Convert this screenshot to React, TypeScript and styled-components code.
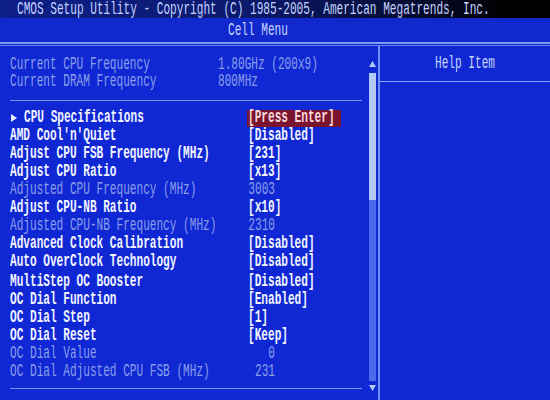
import React from 'react';
import styled, { createGlobalStyle } from 'styled-components';

const GlobalStyle = createGlobalStyle`
  html, body {
    margin: 0;
    padding: 0;
    background: #1028d4;
  }
  * {
    box-sizing: border-box;
  }
`;

type Tone = 'bright' | 'dim' | 'head' | 'hot';

const toneColor: Record<Tone, string> = {
    bright: '#f2f5ff',
    dim: '#8a9ee8',
    head: '#c6d2ff',
    hot: '#f6d8dc',
};

const Screen = styled.div`
  width: 550px;
  height: 400px;
  display: flex;
  flex-direction: column;
  background: #1028d4;
  font-family: "Liberation Mono", "DejaVu Sans Mono", monospace;
  overflow: hidden;
`;

const Txt = styled.span<{ $tone: Tone }>`
  display: inline-block;
  font-size: 11.1px;
  line-height: 11px;
  white-space: pre;
  transform: scaleY(1.6);
  color: ${(p) => toneColor[p.$tone]};
  font-weight: ${(p) => (p.$tone === 'dim' || p.$tone === 'head' ? 400 : 700)};
`;

const TitleBar = styled.div`
  height: 18px;
  display: flex;
  align-items: center;
  padding-left: 17px;
  background: linear-gradient(90deg, #0d1f88 0%, #0b1a6c 45%, #050a2a 78%, #000 92%);
`;

const SubBar = styled.div`
  height: 24px;
  display: flex;
  align-items: center;
  padding-left: 228px;
  background: #1129cc;
`;

const DoubleRule = styled.div`
  height: 4px;
  border-top: 2px solid #7f9df4;
  border-bottom: 1px solid #6484ee;
`;

const Main = styled.div`
  flex: 1;
  display: flex;
`;

const LeftPanel = styled.div`
  width: 369px;
  padding: 9px 7px 0 10px;
  display: flex;
  flex-direction: column;
`;

const Row = styled.div<{ $valueAt: number }>`
  height: 18.1px;
  display: grid;
  grid-template-columns: ${(p) => p.$valueAt}px 1fr;
  align-items: center;
`;

const Label = styled.div`
  display: flex;
  align-items: center;
`;

const Arrow = styled.svg`
  width: 6px;
  height: 8px;
  margin: 0 7px 0 1px;
`;

const Value = styled.div<{ $hot?: boolean; $right?: boolean }>`
  display: flex;
  align-items: center;
  justify-content: ${(p) => (p.$right ? 'flex-end' : 'flex-start')};
  width: ${(p) => (p.$right ? '27px' : 'auto')};
  justify-self: start;
  height: 17px;
  margin-left: ${(p) => (p.$hot ? '-1px' : '0')};
  padding: ${(p) => (p.$hot ? '0 6px 0 1px' : '0')};
  background: ${(p) => (p.$hot ? '#7a1530' : 'transparent')};
`;

const Rule = styled.div<{ $top: number; $bottom: number }>`
  height: 0;
  border-top: 1.5px solid #7896f2;
  margin: ${(p) => p.$top}px 0 ${(p) => p.$bottom}px;
`;

const ScrollCol = styled.div`
  width: 7px;
  display: flex;
  flex-direction: column;
  align-items: center;
  padding: 15px 0 9px;
`;

const ScrollArrow = styled.svg`
  width: 7px;
  height: 6px;
  flex: none;
`;

const Thumb = styled.div`
  width: 7px;
  height: 127px;
  margin-top: 6px;
  flex: none;
  background: #b2caf4;
`;

const Track = styled.div`
  width: 7px;
  flex: 1;
  margin-bottom: 4px;
  background-color: #2c4ce2;
  background-image: radial-gradient(circle, #5a7cf0 0.6px, transparent 0.9px);
  background-size: 2px 2px;
`;

const Divider = styled.div`
  width: 2px;
  margin-left: 2px;
  background: #6f8ff2;
`;

const RightPanel = styled.div`
  flex: 1;
  display: flex;
  flex-direction: column;
`;

const HelpHead = styled.div`
  height: 36px;
  display: flex;
  align-items: center;
  justify-content: center;
  border-bottom: 1px solid #8aa6f6;
`;

interface Setting {
    label: string;
    value: string;
    dim?: boolean;
    hot?: boolean;
    sub?: boolean;
}

const info: Setting[] = [
    { label: 'Current CPU Frequency', value: '1.80GHz (200x9)', dim: true },
    { label: 'Current DRAM Frequency', value: '800MHz', dim: true },
];

const settings: Setting[] = [
    { label: 'CPU Specifications', value: '[Press Enter]', hot: true, sub: true },
    { label: "AMD Cool'n'Quiet", value: '[Disabled]' },
    { label: 'Adjust CPU FSB Frequency (MHz)', value: '[231]' },
    { label: 'Adjust CPU Ratio', value: '[x13]' },
    { label: 'Adjusted CPU Frequency (MHz)', value: '3003', dim: true },
    { label: 'Adjust CPU-NB Ratio', value: '[x10]' },
    { label: 'Adjusted CPU-NB Frequency (MHz)', value: '2310', dim: true },
    { label: 'Advanced Clock Calibration', value: '[Disabled]' },
    { label: 'Auto OverClock Technology', value: '[Disabled]' },
    { label: 'MultiStep OC Booster', value: '[Disabled]' },
    { label: 'OC Dial Function', value: '[Enabled]' },
    { label: 'OC Dial Step', value: '[1]' },
    { label: 'OC Dial Reset', value: '[Keep]' },
    { label: 'OC Dial Value', value: '0', dim: true },
    { label: 'OC Dial Adjusted CPU FSB (MHz)', value: '231', dim: true },
];

function SettingRow({ item, valueAt }: { item: Setting; valueAt: number }) {
    let tone: Tone = 'bright';
    if (item.dim) tone = 'dim';
    return (
        <Row $valueAt={valueAt}>
            <Label>
                {item.sub && (
                    <Arrow viewBox="0 0 6 8">
                        <path d="M0 0 L6 4 L0 8 Z" fill="#e8eeff" />
                    </Arrow>
                )}
                <Txt $tone={tone}>{item.label}</Txt>
            </Label>
            <Value $hot={item.hot} $right={item.dim && valueAt > 230}>
                <Txt $tone={item.hot ? 'hot' : tone}>{item.value}</Txt>
            </Value>
        </Row>
    );
}

export default function App() {
    return (
        <Screen>
            <GlobalStyle />
            <TitleBar>
                <Txt $tone="head">CMOS Setup Utility - Copyright (C) 1985-2005, American Megatrends, Inc.</Txt>
            </TitleBar>
            <SubBar>
                <Txt $tone="head">Cell Menu</Txt>
            </SubBar>
            <DoubleRule />
            <Main>
                <LeftPanel>
                    {info.map((it) => <SettingRow key={it.label} item={it} valueAt={208} />)}
                    <Rule $top={9} $bottom={8} />
                    {settings.map((it) => <SettingRow key={it.label} item={it} valueAt={238} />)}
                    <Rule $top={7} $bottom={0} />
                </LeftPanel>
                <ScrollCol>
                    <ScrollArrow viewBox="0 0 7 6">
                        <path d="M3.5 0 L7 6 L0 6 Z" fill="#b2caf4" />
                    </ScrollArrow>
                    <Thumb />
                    <Track />
                    <ScrollArrow viewBox="0 0 7 6">
                        <path d="M0 0 L7 0 L3.5 6 Z" fill="#b2caf4" />
                    </ScrollArrow>
                </ScrollCol>
                <Divider />
                <RightPanel>
                    <HelpHead>
                        <Txt $tone="head">Help Item</Txt>
                    </HelpHead>
                </RightPanel>
            </Main>
        </Screen>
    );
}
